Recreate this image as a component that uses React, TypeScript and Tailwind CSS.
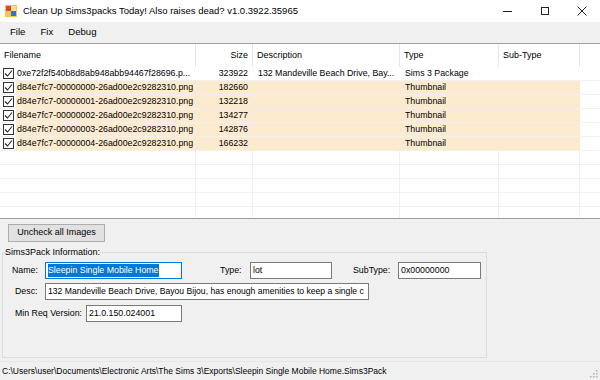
import type { ReactNode } from 'react';

const font = { fontFamily: '"Liberation Sans", Arial, sans-serif' };

interface Row {
  name: string;
  size: string;
  desc: string;
  type: string;
  image: boolean;
}

const rows: Row[] = [
  { name: '0xe72f2f540b8d8ab948abb94467f28696.p...', size: '323922', desc: '132 Mandeville Beach Drive, Bay...', type: 'Sims 3 Package', image: false },
  { name: 'd84e7fc7-00000000-26ad00e2c9282310.png', size: '182660', desc: '', type: 'Thumbnail', image: true },
  { name: 'd84e7fc7-00000001-26ad00e2c9282310.png', size: '132218', desc: '', type: 'Thumbnail', image: true },
  { name: 'd84e7fc7-00000002-26ad00e2c9282310.png', size: '134277', desc: '', type: 'Thumbnail', image: true },
  { name: 'd84e7fc7-00000003-26ad00e2c9282310.png', size: '142876', desc: '', type: 'Thumbnail', image: true },
  { name: 'd84e7fc7-00000004-26ad00e2c9282310.png', size: '166232', desc: '', type: 'Thumbnail', image: true },
];

const cols = 'grid grid-cols-[196px_57px_147px_99px_81px_1fr]';

function AppIcon() {
  return (
    <svg width="12" height="12" viewBox="0 0 12 12">
      <rect x="0" y="0" width="12" height="12" fill="#f4c542" />
      <rect x="1" y="1" width="5" height="5" fill="#e0413a" />
      <rect x="6" y="6" width="5" height="5" fill="#2f6fd6" />
      <rect x="6" y="1" width="5" height="5" fill="#f7e08a" />
    </svg>
  );
}

function CheckBox() {
  return (
    <div className="ml-[3px] mr-[2px] flex h-[11px] w-[11px] shrink-0 items-center justify-center border border-[#333] bg-white">
      <svg width="9" height="9" viewBox="0 0 9 9">
        <path d="M1 4.5 L3.5 7 L8 1.5" fill="none" stroke="#222" strokeWidth="1.1" />
      </svg>
    </div>
  );
}

function HeaderCell({ children, right }: { children?: ReactNode; right?: boolean }) {
  return (
    <div className={`flex items-center border-r border-[#e5e5e5] px-[4px] ${right ? 'justify-end' : ''}`}>
      {children}
    </div>
  );
}

function TextBox({ children, w, focused }: { children: ReactNode; w: string; focused?: boolean }) {
  return (
    <div
      className={`flex h-[17px] items-center overflow-hidden whitespace-nowrap border bg-white px-[2px] ${w} ${
        focused ? 'border-[#0078d7]' : 'border-[#7a7a7a]'
      }`}
    >
      {children}
    </div>
  );
}

export default function App() {
  return (
    <div className="flex h-[380px] w-[600px] flex-col overflow-hidden bg-[#f0f0f0] text-[8.8px] text-black" style={font}>
      {/* title bar */}
      <div className="flex h-[22px] shrink-0 items-center bg-white">
        <div className="ml-[5px] mr-[6px]">
          <AppIcon />
        </div>
        <span className="text-[9.5px]">Clean Up Sims3packs Today! Also raises dead? v1.0.3922.35965</span>
        <div className="ml-auto flex h-full">
          <div className="flex w-[37px] items-center justify-center">
            <div className="h-px w-[9px] bg-[#222]" />
          </div>
          <div className="flex w-[37px] items-center justify-center">
            <div className="h-[8px] w-[8px] border border-[#222]" />
          </div>
          <div className="flex w-[37px] items-center justify-center">
            <svg width="10" height="10" viewBox="0 0 10 10">
              <path d="M0.5 0.5 L9.5 9.5 M9.5 0.5 L0.5 9.5" stroke="#222" strokeWidth="1" />
            </svg>
          </div>
        </div>
      </div>

      {/* menu */}
      <div className="flex h-[21px] shrink-0 items-center text-[9.6px]">
        <span className="ml-[10px]">File</span>
        <span className="ml-[15px]">Fix</span>
        <span className="ml-[15px]">Debug</span>
      </div>

      {/* list view */}
      <div className="flex h-[176px] shrink-0 flex-col border-y border-t-[#a0a0a0] border-b-[#a0a0a0] bg-white">
        <div className={`${cols} h-[23px] shrink-0 text-[9px]`}>
          <HeaderCell>Filename</HeaderCell>
          <HeaderCell right>Size</HeaderCell>
          <HeaderCell>Description</HeaderCell>
          <HeaderCell>Type</HeaderCell>
          <HeaderCell>Sub-Type</HeaderCell>
          <div />
        </div>
        {rows.map(r => {
          const bg = r.image ? 'bg-[#fdebd0]' : '';
          return (
            <div key={r.name} className={`${cols} h-[14px] shrink-0 border-b border-[#f0f0f0]`}>
              <div className="flex items-center overflow-hidden whitespace-nowrap">
                <CheckBox />
                <div className={`flex h-full flex-1 items-center pl-[1px] ${bg}`}>{r.name}</div>
              </div>
              <div className={`flex items-center justify-end pr-[5px] ${bg}`}>{r.size}</div>
              <div className={`flex items-center overflow-hidden whitespace-nowrap pl-[5px] ${bg}`}>{r.desc}</div>
              <div className={`flex items-center pl-[5px] ${bg}`}>{r.type}</div>
              <div className={bg} />
              <div />
            </div>
          );
        })}
        {[0, 1, 2, 3].map(i => (
          <div key={i} className={`${cols} h-[14px] shrink-0 border-b border-[#f0f0f0]`}>
            <div className="border-r border-[#f0f0f0]" />
            <div className="border-r border-[#f0f0f0]" />
            <div className="border-r border-[#f0f0f0]" />
            <div className="border-r border-[#f0f0f0]" />
            <div className="border-r border-[#f0f0f0]" />
            <div />
          </div>
        ))}
        <div className={`${cols} flex-1`}>
          <div className="border-r border-[#f0f0f0]" />
          <div className="border-r border-[#f0f0f0]" />
          <div className="border-r border-[#f0f0f0]" />
          <div className="border-r border-[#f0f0f0]" />
          <div className="border-r border-[#f0f0f0]" />
          <div />
        </div>
      </div>

      {/* bottom panel */}
      <div className="flex h-[142px] shrink-0 flex-col">
        <button
          type="button"
          className="ml-[8px] mt-[5px] h-[18px] w-[97px] border border-[#adadad] bg-[#e1e1e1] text-[9px]"
        >
          Uncheck all Images
        </button>
        <fieldset className="ml-[2px] mt-[5px] h-[111px] w-[485px] border border-[#dcdcdc] px-0 pb-0 pt-[4px]">
          <legend className="ml-[2px] px-0 text-[9px] leading-[11px]">Sims3Pack Information:</legend>
          <div className="flex items-center">
            <span className="ml-[9px] w-[33px]">Name:</span>
            <TextBox w="w-[137px]" focused>
              <span className="bg-[#0078d7] text-white">Sleepin Single Mobile Home</span>
            </TextBox>
            <span className="ml-[38px] w-[30px]">Type:</span>
            <TextBox w="w-[82px]">lot</TextBox>
            <span className="ml-[21px] w-[45px]">SubType:</span>
            <TextBox w="w-[83px]">0x00000000</TextBox>
          </div>
          <div className="mt-[4px] flex items-center">
            <span className="ml-[12px] w-[30px]">Desc:</span>
            <TextBox w="w-[324px]">
              <span className="text-[8.6px]">132 Mandeville Beach Drive, Bayou Bijou, has enough amenities to keep a single c</span>
            </TextBox>
          </div>
          <div className="mt-[5px] flex items-center">
            <span className="ml-[12px] w-[71px]">Min Req Version:</span>
            <TextBox w="w-[96px]">21.0.150.024001</TextBox>
          </div>
        </fieldset>
      </div>

      {/* status bar */}
      <div className="flex h-[19px] shrink-0 items-center border-t border-[#e6e6e6]">
        <span className="ml-[2px] text-[8.5px]">C:\Users\user\Documents\Electronic Arts\The Sims 3\Exports\Sleepin Single Mobile Home.Sims3Pack</span>
        <svg className="ml-auto mr-[2px] self-end mb-[2px]" width="10" height="10" viewBox="0 0 10 10">
          <g fill="#b0b0b0">
            <rect x="8" y="2" width="1.5" height="1.5" />
            <rect x="5" y="5" width="1.5" height="1.5" />
            <rect x="8" y="5" width="1.5" height="1.5" />
            <rect x="2" y="8" width="1.5" height="1.5" />
            <rect x="5" y="8" width="1.5" height="1.5" />
            <rect x="8" y="8" width="1.5" height="1.5" />
          </g>
        </svg>
      </div>
    </div>
  );
}
